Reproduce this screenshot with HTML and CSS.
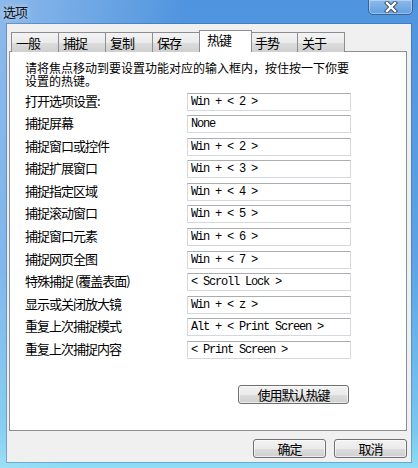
FILE: index.html
```html
<!DOCTYPE html>
<html lang="zh-CN">
  <head>
    <meta charset="UTF-8" />
    <title>选项</title>
    <link rel="stylesheet" href="styles.css">
  </head>

  <body>
    <div class="window">
      <div class="titlebar">
        <span class="title">选项</span>
        <button class="close-btn" aria-label="关闭">
          <svg width="16" height="12" viewBox="0 0 16 12">
            <path d="M4 2 L12 10 M12 2 L4 10" stroke="#3b4a5e" stroke-width="4.2" stroke-linecap="square" fill="none" />
            <path d="M4 2 L12 10 M12 2 L4 10" stroke="#ffffff" stroke-width="2.4" stroke-linecap="square" fill="none" />
          </svg>
        </button>
      </div>

      <div class="frame">
        <div class="client">
          <div class="tabs">
            <div class="tab">一般</div>
            <div class="tab">捕捉</div>
            <div class="tab">复制</div>
            <div class="tab">保存</div>
            <div class="tab tab-active">热键</div>
            <div class="tab">手势</div>
            <div class="tab">关于</div>
          </div>

          <div class="panel">
            <p class="hint">请将焦点移动到要设置功能对应的输入框内，按住按一下你要设置的热键。</p>

            <div class="hotkeys">
              <label>打开选项设置:</label>
              <input class="key-box" value="Win + &lt; 2 &gt;" />
              <label>捕捉屏幕</label>
              <input class="key-box" value="None" />
              <label>捕捉窗口或控件</label>
              <input class="key-box" value="Win + &lt; 2 &gt;" />
              <label>捕捉扩展窗口</label>
              <input class="key-box" value="Win + &lt; 3 &gt;" />
              <label>捕捉指定区域</label>
              <input class="key-box" value="Win + &lt; 4 &gt;" />
              <label>捕捉滚动窗口</label>
              <input class="key-box" value="Win + &lt; 5 &gt;" />
              <label>捕捉窗口元素</label>
              <input class="key-box" value="Win + &lt; 6 &gt;" />
              <label>捕捉网页全图</label>
              <input class="key-box" value="Win + &lt; 7 &gt;" />
              <label>特殊捕捉 (覆盖表面)</label>
              <input class="key-box" value="&lt; Scroll Lock &gt;" />
              <label>显示或关闭放大镜</label>
              <input class="key-box" value="Win + &lt; z &gt;" />
              <label>重复上次捕捉模式</label>
              <input class="key-box" value="Alt + &lt; Print Screen &gt;" />
              <label>重复上次捕捉内容</label>
              <input class="key-box" value="&lt; Print Screen &gt;" />
            </div>

            <div class="panel-actions">
              <button class="btn btn-wide">使用默认热键</button>
            </div>
          </div>

          <div class="dialog-actions">
            <button class="btn">确定</button>
            <button class="btn">取消</button>
          </div>
        </div>
      </div>
    </div>
  </body>
</html>
```

FILE: styles.css
```css
body {
  margin: 0;
  font-family: "Noto Sans CJK SC", "Liberation Sans", sans-serif;
}

.window {
  width: 418px;
  height: 468px;
  display: flex;
  flex-direction: column;
  background:
    linear-gradient(105deg, rgba(255, 255, 255, 0.35) 0%, rgba(255, 255, 255, 0) 35%),
    linear-gradient(180deg, #4f94df 0%, #5da3e6 55%, #79c7ef 92%, #8fdcf5 100%);
}

.titlebar {
  height: 24px;
  display: flex;
  justify-content: space-between;
  align-items: flex-start;
}

.title {
  font-size: 13px;
  letter-spacing: -1px;
  line-height: 24px;
  padding-left: 3px;
  color: #111;
  text-shadow: 0 0 6px rgba(255, 255, 255, 0.7);
}

.close-btn {
  width: 45px;
  height: 16px;
  margin: -1px 5px 0 0;
  padding: 0;
  display: flex;
  align-items: center;
  justify-content: center;
  border: 1px solid #3b6391;
  border-radius: 0 0 5px 5px;
  background: linear-gradient(180deg, rgba(255, 255, 255, 0.35), rgba(255, 255, 255, 0.1));
  box-shadow: inset 0 0 0 1px rgba(255, 255, 255, 0.35);
}

.frame {
  flex: 1;
  display: flex;
  padding: 0 7px 6px 7px;
}

.client {
  flex: 1;
  display: flex;
  flex-direction: column;
  padding: 6px 4px 4px 2px;
  background-color: #f0f0f0;
  box-shadow: 0 0 0 1px rgba(40, 80, 130, 0.35);
}

.tabs {
  display: flex;
  align-items: flex-end;
  height: 22px;
  padding-left: 2px;
  margin-bottom: -1px;
}

.tab {
  position: relative;
  width: 48px;
  height: 20px;
  box-sizing: border-box;
  margin-right: -1px;
  padding-left: 4px;
  font-size: 13px;
  letter-spacing: -1px;
  line-height: 19px;
  border: 1px solid #8c8e94;
  border-bottom: none;
  background: linear-gradient(180deg, #f3f3f3 0%, #ebebeb 50%, #dddddd 51%, #cfcfcf 100%);
}

.tab-active {
  z-index: 1;
  width: 53px;
  height: 22px;
  margin: 0 -2px 0 0;
  padding-left: 7px;
  line-height: 17px;
  background: #fff;
}

.panel {
  flex: 1;
  border: 1px solid #8c8e94;
  background-color: #fff;
  padding: 9px 0 0 15px;
}

.hint {
  width: 330px;
  margin: 0;
  font-size: 12px;
  line-height: 13px;
}

.hotkeys {
  display: grid;
  grid-template-columns: 162px 164px;
  grid-auto-rows: 18px;
  row-gap: 4.6px;
  margin-top: 5.5px;
}

.hotkeys label {
  font-size: 13px;
  letter-spacing: -1px;
  line-height: 16px;
}

.key-box {
  box-sizing: border-box;
  width: 164px;
  height: 18px;
  margin: 0;
  padding: 0 0 0 3px;
  font-family: "Liberation Mono", monospace;
  font-size: 12px;
  letter-spacing: -1.2px;
  color: #000;
  border: 1px solid #d5d9df;
  border-top-color: #abadb3;
  background: #fff;
}

.panel-actions {
  width: 324px;
  display: flex;
  justify-content: flex-end;
  margin-top: 26px;
}

.btn {
  width: 73px;
  height: 19px;
  padding: 0;
  font-family: "Noto Sans CJK SC", sans-serif;
  font-size: 13px;
  letter-spacing: -1px;
  line-height: 15px;
  color: #000;
  border: 1px solid #707070;
  border-radius: 3px;
  background: linear-gradient(180deg, #f2f2f2 0%, #ebebeb 50%, #dddddd 51%, #cfcfcf 100%);
  box-shadow: inset 0 0 0 1px rgba(255, 255, 255, 0.6);
}

.btn-wide {
  width: 111px;
}

.dialog-actions {
  display: flex;
  justify-content: flex-end;
  gap: 8px;
  margin-top: 8px;
}
```
